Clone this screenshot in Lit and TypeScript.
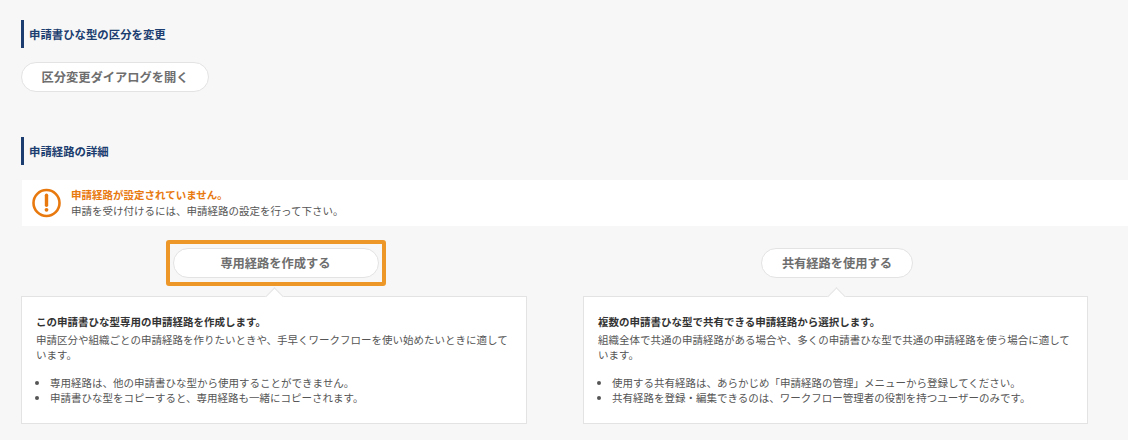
import { LitElement, html, css } from "lit";
import { customElement } from "lit/decorators.js";

@customElement("app-root")
export class AppRoot extends LitElement {
  static styles = css`
    :host {
      display: block;
      width: 1128px;
      height: 440px;
      overflow: hidden;
      background: #f7f7f7;
      font-family: "Noto Sans CJK JP", "Noto Sans", sans-serif;
      color: #555;
      box-sizing: border-box;
      padding: 20px 40px 0 21px;
    }
    * { box-sizing: border-box; }
    .heading {
      height: 28px;
      border-left: 3px solid #1b3d6f;
      padding-left: 5px;
      font-size: 11.4px;
      font-weight: 700;
      line-height: 28px;
      color: #1b3d6f;
    }
    .btn {
      display: flex;
      align-items: center;
      justify-content: center;
      height: 30px;
      padding: 0;
      background: #fff;
      border: 1px solid #e3e3e3;
      border-radius: 15px;
      font: 700 12.25px/1 "Noto Sans CJK JP", "Noto Sans", sans-serif;
      color: #6e6e6e;
    }
    .btn-change { width: 188px; margin-top: 14px; margin-bottom: 45px; }
    .notice {
      display: flex;
      align-items: center;
      gap: 10px;
      height: 46px;
      margin: 15px -40px 14px 1px;
      padding-left: 9px;
      background: #fff;
    }
    .notice svg { flex: none; width: 30px; height: 30px; }
    .notice-text { font-size: 10.5px; line-height: 16px; color: #555; }
    .notice-title { font-weight: 700; color: #e8790f; }
    .cols {
      display: grid;
      grid-template-columns: 506px 505px;
      column-gap: 56px;
    }
    .col { display: flex; flex-direction: column; align-items: stretch; }
    .slot {
      display: flex;
      justify-content: center;
      align-items: center;
      height: 46px;
      margin-bottom: 10px;
      padding-left: 3px;
    }
    .highlight {
      display: flex;
      align-items: center;
      justify-content: center;
      width: 220px;
      height: 46px;
      border: 4px solid #ec9727;
      border-radius: 3px;
    }
    .btn-own { width: 206px; }
    .btn-shared { width: 152px; }
    .card {
      position: relative;
      height: 128px;
      padding: 17px 14px 0;
      background: #fff;
      border: 1px solid #e3e3e3;
      font-size: 10.5px;
      line-height: 15px;
      color: #555;
    }
    .card::before {
      content: "";
      position: absolute;
      left: 50%;
      top: -7px;
      width: 12px;
      height: 12px;
      margin-left: -6px;
      background: #fff;
      border-top: 1px solid #e3e3e3;
      border-left: 1px solid #e3e3e3;
      transform: rotate(45deg);
    }
    .card-title { font-weight: 700; color: #333; margin: 0 0 3px; }
    .card p { margin: 0; }
    .card ul { margin: 13px 0 0; padding: 0 0 0 14px; }
    .card li { padding: 0; }
    .card li::marker { font-size: 10px; }
  `;

  render() {
    return html`
      <div class="heading">申請書ひな型の区分を変更</div>
      <button class="btn btn-change">区分変更ダイアログを開く</button>
      <div class="heading">申請経路の詳細</div>
      <div class="notice">
        <svg viewBox="0 0 30 30" aria-hidden="true">
          <circle cx="15.5" cy="15" r="13" fill="none" stroke="#e8790f" stroke-width="2.6"></circle>
          <path d="M15.5 7.2v10" fill="none" stroke="#e8790f" stroke-width="3.4" stroke-linecap="round"></path>
          <circle cx="15.5" cy="21.8" r="1.9" fill="#e8790f"></circle>
        </svg>
        <div class="notice-text">
          <div class="notice-title">申請経路が設定されていません。</div>
          <div>申請を受け付けるには、申請経路の設定を行って下さい。</div>
        </div>
      </div>
      <div class="cols">
        <div class="col">
          <div class="slot">
            <div class="highlight"><button class="btn btn-own">専用経路を作成する</button></div>
          </div>
          <div class="card">
            <div class="card-title">この申請書ひな型専用の申請経路を作成します。</div>
            <p>申請区分や組織ごとの申請経路を作りたいときや、手早くワークフローを使い始めたいときに適しています。</p>
            <ul>
              <li>専用経路は、他の申請書ひな型から使用することができません。</li>
              <li>申請書ひな型をコピーすると、専用経路も一緒にコピーされます。</li>
            </ul>
          </div>
        </div>
        <div class="col">
          <div class="slot"><button class="btn btn-shared">共有経路を使用する</button></div>
          <div class="card">
            <div class="card-title">複数の申請書ひな型で共有できる申請経路から選択します。</div>
            <p>組織全体で共通の申請経路がある場合や、多くの申請書ひな型で共通の申請経路を使う場合に適しています。</p>
            <ul>
              <li>使用する共有経路は、あらかじめ「申請経路の管理」メニューから登録してください。</li>
              <li>共有経路を登録・編集できるのは、ワークフロー管理者の役割を持つユーザーのみです。</li>
            </ul>
          </div>
        </div>
      </div>
    `;
  }
}
